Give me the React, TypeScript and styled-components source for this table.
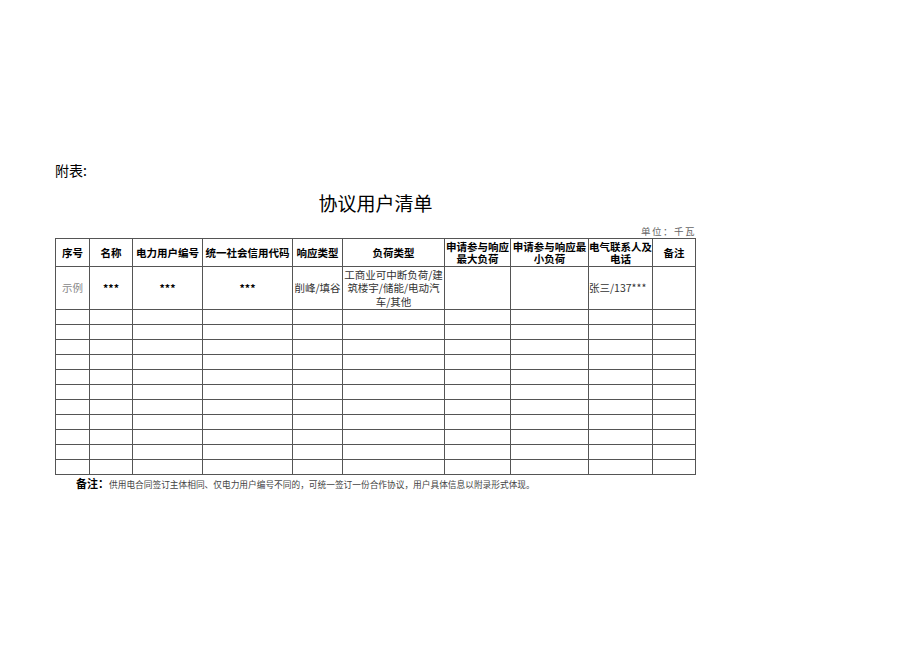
import styled, { createGlobalStyle } from "styled-components";

const GlobalStyle = createGlobalStyle`
  html, body {
    margin: 0;
    padding: 0;
    background: #fff;
  }
  body {
    font-family: "Noto Sans CJK SC", "Liberation Sans", sans-serif;
    color: #000;
  }
`

const Page = styled.div`
  width: 920px;
  height: 651px;
  box-sizing: border-box;
  padding: 160px 0 0 55px;
`
const Sheet = styled.div`
  width: 641px;
  display: flex;
  flex-direction: column;
`
const Lead = styled.div`
  font-size: 14px;
  line-height: 20px;
  height: 20px;
`
const Title = styled.h1`
  margin: 11px 0 0;
  font-size: 19px;
  line-height: 24px;
  font-weight: 400;
  text-align: center;
`
const Unit = styled.div`
  margin-top: 10px;
  font-size: 9.5px;
  line-height: 12px;
  color: #666;
  text-align: right;
  letter-spacing: 1.5px;
`
const Table = styled.table`
  margin-top: 1px;
  border-collapse: collapse;
  table-layout: fixed;
  width: 641px;
`
const HeadCell = styled.th`
  border: 1px solid #555;
  height: 27px;
  padding: 0;
  font-size: 10.5px;
  line-height: 12px;
  font-weight: 700;
  text-align: center;
  vertical-align: middle;
  overflow: hidden;
`
const Cell = styled.td<{ $tone?: string, $align?: string, $bold?: boolean }>`
  border: 1px solid #555;
  height: 14px;
  padding: 0;
  font-size: 10.5px;
  line-height: 13.5px;
  font-weight: ${props => props.$bold ? 700 : 400};
  color: ${props => props.$tone || "#333"};
  text-align: ${props => props.$align || "center"};
  vertical-align: middle;
  overflow: hidden;
`
const ExampleRow = styled.tr`
  height: 43px;
`
const Footer = styled.div`
  padding: 1px 0 0 21px;
  font-size: 8.7px;
  line-height: 14px;
  color: #444;
  white-space: nowrap;
`
const FooterLabel = styled.b`
  font-size: 11px;
  color: #000;
`

const widths = [34, 43, 70, 90, 50, 102, 66, 78, 64, 43]
const headers = [
  "序号",
  "名称",
  "电力用户编号",
  "统一社会信用代码",
  "响应类型",
  "负荷类型",
  "申请参与响应最大负荷",
  "申请参与响应最小负荷",
  "电气联系人及电话",
  "备注",
]
const emptyRows = Array.from({length: 11}, (_, i) => i)

const App = () => {
  return (
    <Page>
      <GlobalStyle/>
      <Sheet>
        <Lead>附表:</Lead>
        <Title>协议用户清单</Title>
        <Unit>单位：千瓦</Unit>
        <Table>
          <colgroup>
            {widths.map((w, i) => <col key={i} style={{width: w}}/>)}
          </colgroup>
          <thead>
          <tr>
            {headers.map(h => <HeadCell key={h}>{h}</HeadCell>)}
          </tr>
          </thead>
          <tbody>
          <ExampleRow>
            <Cell $tone="#888">示例</Cell>
            <Cell $tone="#000" $bold>***</Cell>
            <Cell $tone="#000" $bold>***</Cell>
            <Cell $tone="#000" $bold>***</Cell>
            <Cell>削峰/填谷</Cell>
            <Cell>工商业可中断负荷/建筑楼宇/储能/电动汽车/其他</Cell>
            <Cell/>
            <Cell/>
            <Cell $align="left">张三/137***</Cell>
            <Cell/>
          </ExampleRow>
          {emptyRows.map(r => (
            <tr key={r}>
              {widths.map((_, i) => <Cell key={i}/>)}
            </tr>
          ))}
          </tbody>
        </Table>
        <Footer>
          <FooterLabel>备注：</FooterLabel>供用电合同签订主体相同、仅电力用户编号不同的，可统一签订一份合作协议，用户具体信息以附录形式体现。
        </Footer>
      </Sheet>
    </Page>
  );
};

export default App;
